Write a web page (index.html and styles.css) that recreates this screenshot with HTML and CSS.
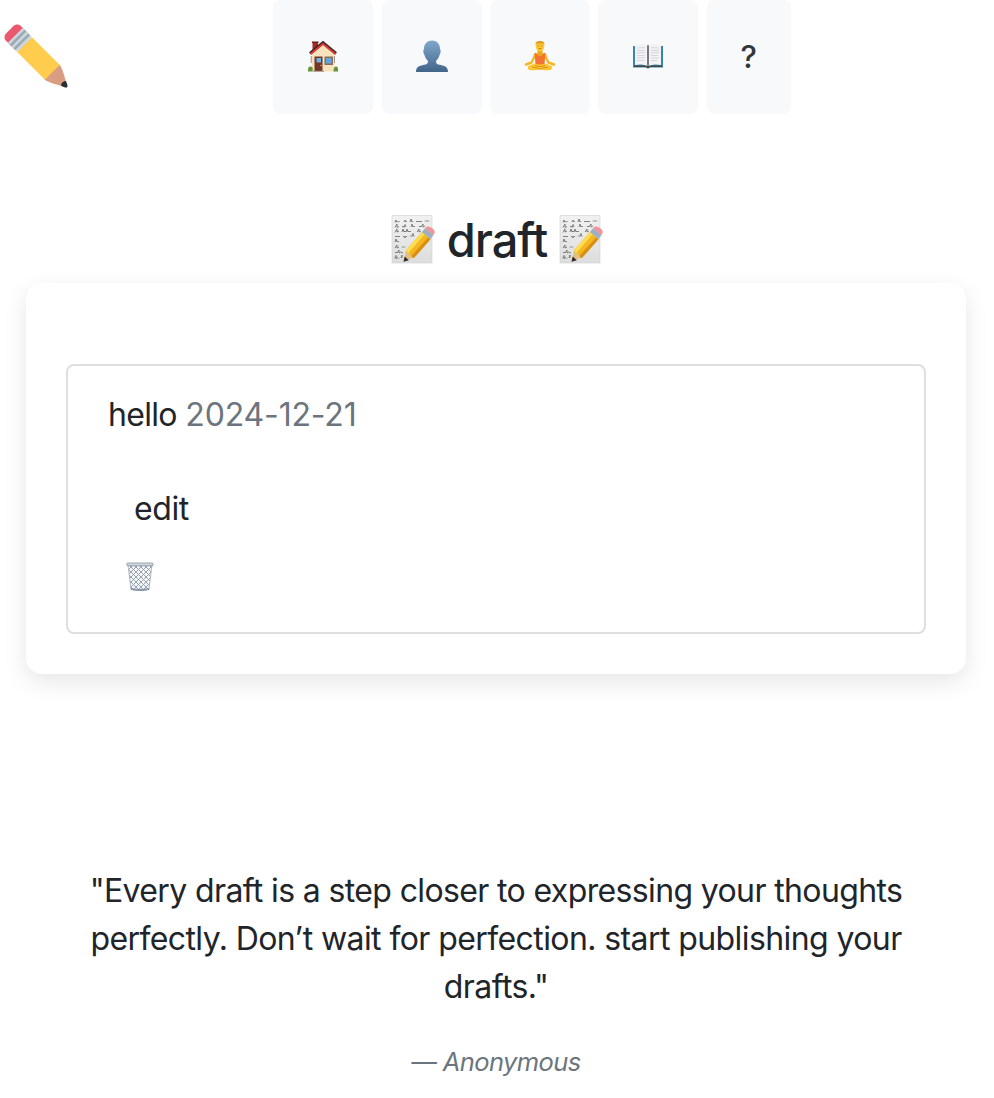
FILE: index.html
```
<!DOCTYPE html>
<html lang="en">
<head>
<meta charset="utf-8">
<title>draft</title>
<link rel="stylesheet" href="styles.css">
</head>
<body>
<svg class="defs" width="0" height="0" aria-hidden="true">
  <defs>
    <linearGradient id="paper" x1="0" y1="0" x2="0" y2="1"><stop offset="0" stop-color="#f1f1f1"/><stop offset="1" stop-color="#dcdddd"/></linearGradient>
    <linearGradient id="person" x1="0" y1="0" x2="0" y2="1"><stop offset="0" stop-color="#7fa9cb"/><stop offset="1" stop-color="#426589"/></linearGradient>
    <pattern id="mesh" width="5" height="5" patternUnits="userSpaceOnUse"><path d="M0 0L5 5M5 0L0 5" stroke="#8f9aa8" stroke-width=".9"/></pattern>
    <symbol id="memo" viewBox="0 0 44 50">
      <path d="M1 1.500h40v47.500H1z" fill="url(#paper)" stroke="#d0d0d0" stroke-width=".6"/>
      <g fill="none" stroke="#666" stroke-width=".8" stroke-linejoin="round">
        <path d="M4 8.500l1-2.500.5 2 1-.5 1 .5 1-1M13 8l1-2 1 2 1-1M19 8l1-3 1 3 1-1M25 8q1-2 2 0l1-1 1 1 1-1 1 1M34 7.500l1-1 1 1 1-1 1 1"/>
        <path d="M4 13.500l2-3.500v3.500l2-1M11 13l1-1 1 1.500 1-3 1 2.500M20 13l1-3 1 3 1-1 1 1M28 13l1-1 1 1 2-3v3l2-1"/>
        <path d="M4 18.500l2-3.500v3l2-1M11 18l1-3 1 3 1-1 1 1 1-3 1 3 1-1 1 1 1-1M26 18l2-3v3l2-1"/>
        <path d="M4 23l1-1 1 1 1-1 1 1 1-1M12 23l1-1 1 2 1-2 1 1M19 22.500l1-1 1 1 1-3 1 3M4 28l1-3 1 3 1-1 1 1"/>
        <path d="M4 34l2-3v3l2-1M11 33.500l1-1 1 1 1-1M4 39l1-1 1 1 2-3v3l2-1 2 1M4 44.500l1-3v3l2-1 1 1M10 44l1-3v3"/>
      </g>
      <path d="M12.500 47.800l2.700-12 7.700 7.700z" fill="#e4bf82"/>
      <path d="M12.500 47.800l1.200-5.300 4.100 3.800z" fill="#2d2a29"/>
      <path d="M15 36.300L31 18l8.500 7.200L22.700 44.300z" fill="#f5b71f"/>
      <path d="M15 36.300L31 18l2.700 2.300L17.500 38.900z" fill="#ffdc4f"/>
      <path d="M22.700 44.300L39.500 25.200l-2.300-2L20.300 42z" fill="#d98e15"/>
      <path d="M31 18l3.200-4 8.300 7-3 4.200z" fill="#9db1c3"/>
      <path d="M34.200 14q2.500-3 7 .2t1 7z" fill="#f0959b"/>
    </symbol>
  </defs>
</svg>

<header class="topbar">
  <svg class="logo" viewBox="0 0 36 36" role="img" aria-label="pencil">
    <path fill="#D99E82" d="M35.222 33.598c-.647-2.101-1.705-6.059-2.325-7.566-.501-1.216-.969-2.438-1.544-3.014-.575-.575-1.553-.530-2.143.058 0 0-2.469 1.675-3.354 2.783-1.108.882-2.785 3.357-2.785 3.357-.590.590-.635 1.567-.060 2.143.576.575 1.798 1.043 3.015 1.544 1.506.620 5.465 1.676 7.566 2.325.359.110 1.740-1.271 1.630-1.630z"/>
    <path fill="#EA596E" d="M13.643 5.308c1.151 1.151 1.151 3.016 0 4.167l-4.167 4.168c-1.151 1.150-3.018 1.150-4.167 0L1.141 9.475c-1.150-1.151-1.150-3.016 0-4.167l4.167-4.167c1.150-1.151 3.016-1.151 4.167 0l4.168 4.167z"/>
    <path fill="#FFCC4D" d="M31.353 23.018l-4.170 4.170-4.163 4.165L7.392 15.726l8.335-8.334 15.626 15.626z"/>
    <path fill="#292F33" d="M32.078 34.763s2.709 1.489 3.441.757c.732-.732-.765-3.435-.765-3.435s-2.566.048-2.676 2.678z"/>
    <path fill="#CCD6DD" d="M2.183 10.517l8.335-8.335 5.208 5.209-8.334 8.335z"/>
    <path fill="#99AAB5" d="M3.225 11.558l8.334-8.334 1.042 1.042L4.267 12.600zm2.083 2.086l8.335-8.335 1.042 1.042-8.335 8.334z"/>
  </svg>
  <nav class="nav">
    <a class="nav-item"><svg class="icon" viewBox="0 0 32 34">
      <path d="M5.500 2h5.500v9H5.500z" fill="#a42b22"/><path d="M5 1.500h6.500V3H5z" fill="#6e201b"/>
      <path d="M5 13L16 3.500 27.500 13v18.500H5z" fill="#f6e3bd"/><path d="M3.800 16h.9v7h-.9zM27 16h.9v7h-.9z" fill="#8f8986"/>
      <path d="M3 13.500L16 2.700 29 13.500" fill="none" stroke="#3f2728" stroke-width="3"/>
      <path d="M3.500 14L16 4 28.500 14" fill="none" stroke="#df3b36" stroke-width="1.800"/>
      <path d="M7.500 16.500h8V31h-8z" fill="#733626"/><path d="M9.500 18h4.500v4.500H9.500z" fill="#6cb4e6"/><circle cx="14" cy="25.500" r=".8" fill="#e3b264"/>
      <path d="M17.500 16.500h8.500v8.500h-8.500z" fill="#8b6c57"/><path d="M19 18h5.500v5.500H19z" fill="#62a4dc"/>
      <path d="M1 31.500q-.5-5 2.500-5t2 5zM26.500 31.500q0-5 2.500-5t2 5z" fill="#64953a"/><path d="M6 30.700h11v1H6z" fill="#9c8978"/>
    </svg></a>
    <a class="nav-item"><svg class="icon" viewBox="0 0 32 34">
      <path d="M0 32c0-5 3-6 7-7 4-.8 5-1 5-4-2-2-3-4-3.500-6C7 13 7 10 8 9c0-5 3-8.500 8-8.500S24 4 24 9c1 1 1 4-.5 6-.5 2-1.500 4-3.500 6 0 3 1 3.200 5 4 4 1 7 2 7 7z" fill="url(#person)"/>
    </svg></a>
    <a class="nav-item"><svg class="icon" viewBox="0 0 32 34">
      <path d="M11 14.500q-1.500 5-3.500 8L2 24.500M21 14.500q1.500 5 3.500 8l5.500 2" fill="none" stroke="#f6b726" stroke-width="2.500" stroke-linecap="round" stroke-linejoin="round"/>
      <path d="M13.500 9h5v4l2.500 1-1 4h-8l-1-4 2.500-1z" fill="#eda51d"/>
      <path d="M12 12.800q1 3.200 4 3.200t4-3.200l1.300.7-.8 11.500h-9l-.8-11.500z" fill="#f27332"/>
      <path d="M10.500 23.500q5.500 2 11 0l5 2q2.500 1 1.500 3.200-1 1.800-5 1.500-4 .5-7-1-3 1.500-7 1-4 .3-5-1.500-1-2.200 1.500-3.200z" fill="#ffc42e"/>
      <path d="M8 27q5 .5 8 2.200 3-1.700 8-2.200M11 25.500l5 1.300 5-1.300" fill="none" stroke="#c98620" stroke-width=".8"/>
      <ellipse cx="16" cy="6.200" rx="4.200" ry="5.200" fill="#ffc832"/><path d="M11.700 5.500q-1-4.500 4.300-4.500t4.300 4.500l-1-2h-6.600z" fill="#dd9a22"/>
      <path d="M13.700 5.800h1.400m1.800 0h1.400M14.700 8.600h2.600" stroke="#94621c" stroke-width=".7"/>
    </svg></a>
    <a class="nav-item"><svg class="icon" viewBox="0 0 32 34">
      <path d="M1 6h30v21.500H18q-2 2-4 0H1z" fill="#3884b2"/><path d="M2 25.500h28V27H18q-2 2-4 0H2z" fill="#4b463d"/>
      <path d="M3 5q8-2 13 0 5-2 13 0v20q-8-1.500-13 1-5-2.500-13-1z" fill="#f3f3f5"/>
      <path d="M15 5l1 .4 1-.4v20.500l-1 .5-1-.5z" fill="#77797e"/>
      <path d="M5 8l8-.5M5 10.500h7.500M5 13l8-.5M5 15.500h7.500M5 18l8-.5M5 20.500h7.500M19 7.500l8 .5M19 10.500h8M19 13l8-.5M19 15.500h7M19 18h8M19 20.500h6" stroke="#d2d2d8" stroke-width=".9"/>
    </svg></a>
    <a class="nav-item nav-help">?</a>
  </nav>
</header>

<main>
  <h1 class="title"><svg class="memo"><use href="#memo"/></svg><span>draft</span><svg class="memo"><use href="#memo"/></svg></h1>
  <section class="card">
    <article class="entry">
      <div class="entry-head"><span class="name">hello</span><span class="date">2024-12-21</span></div>
      <a class="edit">edit</a>
      <svg class="trash" viewBox="0 0 28 30" role="img" aria-label="delete">
        <path d="M2 3h24l-3 24q-9 3-18 0z" fill="#f3f5f7"/><path d="M2 3h24l-3 24q-9 3-18 0z" fill="url(#mesh)" stroke="#a0abb7" stroke-width=".8"/>
        <path d="M4.800 26q9 2 18.400 0V28q-9 2-18.400 0z" fill="#8799ab"/>
        <rect x=".7" y="1" width="26.600" height="2.800" rx="1.400" fill="#d3dae1" stroke="#87929d" stroke-width=".8"/>
      </svg>
    </article>
  </section>
  <figure class="quote">
    <blockquote><span class="q1">"Every draft is a step closer to expressing your thoughts</span><br><span class="q2">perfectly. Don’t wait for perfection. start publishing your</span><br><span class="q3">drafts."</span></blockquote>
    <figcaption>— Anonymous</figcaption>
  </figure>
</main>
</body>
</html>
```
FILE: styles.css
```
* { box-sizing: border-box; }
body { margin: 0; background: #fff; color: #212529; font: 400 32px/48px Inter, "Liberation Sans", sans-serif; font-variant-ligatures: none; }
.defs { display: block; }
.topbar { display: flex; height: 114px; }
.logo { width: 64px; height: 64px; margin: 24px 0 0 4px; }
.nav { display: flex; gap: 8.400px; margin-left: 205.200px; height: 113.500px; }
.nav-item { display: flex; align-items: center; justify-content: center; width: 100px; border-radius: 8px; background: #f8f9fb; }
.nav-help { width: 84px; font-size: 31px; font-weight: 450; color: #32373c; }
.icon { width: 32px; height: 34px; }
.title { display: flex; align-items: center; justify-content: center; gap: 12px; height: 58px; margin: 97px 0 14px; font-size: 47px; line-height: 58px; font-weight: 550; letter-spacing: -1.100px; }
.memo { width: 44px; height: 50px; margin-top: -3px; }
.card { width: 940px; height: 391px; margin-left: 26px; padding: 81px 40px 40px; border-radius: 16px; background: #fff; box-shadow: 0 8px 24px rgba(0, 0, 0, .1); }
.entry { display: flex; flex-direction: column; align-items: flex-start; height: 270px; padding: 25px 40px 23px; border: 2px solid #dedfe0; border-radius: 8px; }
.entry-head { display: flex; gap: 8.500px; letter-spacing: -.700px; }
.date { color: #6c757d; letter-spacing: -.150px; }
.edit { margin: 46px 0 0 26px; letter-spacing: -.400px; }
.trash { width: 28px; height: 30px; margin: 29px 0 0 18px; }
.quote { margin: 193px 2px 0 0; text-align: center; }
.quote blockquote { margin: 0; white-space: nowrap; }
.q1 { letter-spacing: -.630px; }
.q2 { letter-spacing: -.590px; }
.q3 { letter-spacing: -.550px; }
.quote figcaption { margin-top: 31px; color: #6c757d; font-size: 25.500px; line-height: 40px; font-style: italic; letter-spacing: -.600px; }
```
